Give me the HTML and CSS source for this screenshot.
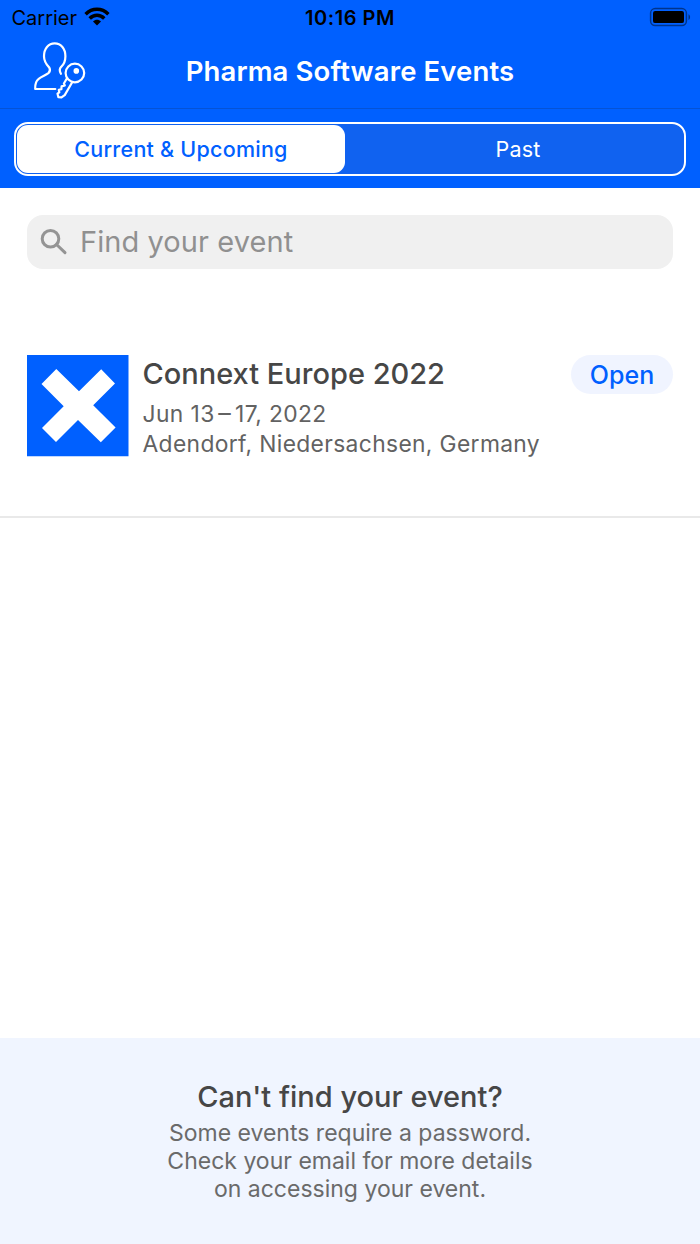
FILE: index.html
```html
<!DOCTYPE html>
<html lang="en">
<head>
<meta charset="utf-8">
<title>Pharma Software Events</title>
<link rel="stylesheet" href="styles.css">
</head>
<body>
<div class="screen">
  <header class="header">
    <div class="status">
      <div class="status-left">
        <span class="carrier">Carrier</span>
        <svg class="wifi" width="26" height="20" viewBox="0 0 26 20" fill="none">
          <path d="M1.6 7.2C8.2.7 17.8.7 24.4 7.2" stroke="#000" stroke-width="3.5"/>
          <path d="M5.7 11.4c4.2-4.1 10.4-4.1 14.6 0" stroke="#000" stroke-width="3.5"/>
          <path d="M13 18.6l-4-4.1c2.4-2.2 5.6-2.2 8 0z" fill="#000"/>
        </svg>
      </div>
      <span class="time">10:16 PM</span>
      <div class="status-right">
        <svg width="42" height="20" viewBox="0 0 42 20" fill="none">
          <rect x="1.6" y="1.6" width="35.8" height="17" rx="4.5" stroke="#000" stroke-opacity=".45" stroke-width="1.5"/>
          <rect x="4" y="4.1" width="31" height="12" rx="2.2" fill="#000"/>
          <path d="M39.5 7.3c2.1.9 2.1 4.7 0 5.6z" fill="#000" fill-opacity=".5"/>
        </svg>
      </div>
    </div>
    <div class="nav">
      <svg class="account" width="80" height="68" viewBox="0 0 80 68" fill="none" stroke="#fff" stroke-width="2.2" stroke-linecap="round" stroke-linejoin="round">
        <path d="M35.3 53H15.2c-.3-5.2.5-8 3.500-10.200 3.300-2.400 7-3.600 9.700-5.600 1.500-1.300 1.900-3.700.9-5.600C26.200 28.500 24 25 24 20.300 24 12.500 28.400 7.400 34.700 7.400S45.400 12.500 45.400 20.300c0 4.700-1.600 8.300-4.200 10.500-1.900 1.900-1.700 4.500-.3 7"/>
        <circle cx="54.900" cy="37" r="9.300"/>
        <circle cx="56.300" cy="34.900" r="1.700" fill="#fff"/>
        <path d="M47 42.200l-3.100 5.300.9 1.900-3.200 1-.2 2.800-2.600.6.500 2.600-1.800 1.200.9 3.600 3.100.2 3.200-2.300L52.200 46.200"/>
      </svg>
      <h1 class="title">Pharma Software Events</h1>
    </div>
    <div class="segment-bar">
      <div class="segments">
        <button class="segment selected">Current &amp; Upcoming</button>
        <button class="segment past">Past</button>
      </div>
    </div>
  </header>
  <main class="content">
    <div class="search">
      <svg class="search-icon" width="28" height="28" viewBox="0 0 28 28" fill="none" stroke="#949494" stroke-width="3">
        <circle cx="10.500" cy="10.700" r="8.300"/>
        <path d="M16.500 16.500l8.500 8.200" stroke-linecap="round"/>
      </svg>
      <span class="placeholder">Find your event</span>
    </div>
    <article class="event">
      <svg class="event-logo" width="102" height="102" viewBox="0 0 102 102">
        <path fill="#0060ff" d="M0 0h101.500v101.300H0z"/>
        <path fill="#fff" d="M29.300 14L52 36.200 74.200 14.300 88 28.500 66.200 50.200 88.600 72.500 73.800 87.300 51 65 29 87 15 73 36.700 51.300 14.500 29z"/>
      </svg>
      <div class="event-text">
        <h2 class="event-name">Connext Europe 2022</h2>
        <p class="event-date">Jun 13<span class="dash">–</span>17, 2022</p>
        <p class="event-place">Adendorf, Niedersachsen, Germany</p>
      </div>
      <button class="open">Open</button>
    </article>
  </main>
  <footer class="help">
    <h2 class="help-title">Can't find your event?</h2>
    <p class="help-text">Some events require a password.<br>Check your email for more details<br>on accessing your event.</p>
  </footer>
</div>
</body>
</html>
```
FILE: styles.css
```css
* { box-sizing: border-box; margin: 0; padding: 0; }
body { font-family: Inter, "Liberation Sans", sans-serif; background: #fff; }
button { border: 0; background: none; font: inherit; white-space: nowrap; }
svg { display: block; flex: none; }
h1, h2, p, span { white-space: nowrap; }
.screen { width: 700px; height: 1244px; display: flex; flex-direction: column; overflow: hidden; }

.header { height: 188px; flex: none; background: #0060ff; }
.status { height: 36px; display: grid; grid-template-columns: 1fr auto 1fr; color: #000; line-height: 36px; }
.status-left { display: flex; padding-left: 11.5px; gap: 7px; }
.wifi { margin-top: 7px; }
.carrier { font-size: 20px; }
.time { font-size: 20px; font-weight: 600; letter-spacing: .55px; }
.status-right { display: flex; justify-content: flex-end; padding: 7px 9px 0 0; }
.nav { height: 73px; display: grid; grid-template-columns: 1fr auto 1fr; border-bottom: 1px solid #0553d6; }
.account { margin-left: 20px; }
.title { color: #fff; font-size: 27.5px; font-weight: 600; line-height: 70px; letter-spacing: .13px; }
.segment-bar { padding: 13px 14px 0; }
.segments { height: 54px; border: 2px solid #fff; border-radius: 14px; background: #1062f0; display: grid; grid-template-columns: 328px 1fr; padding: 1px 0 1px 1px; }
.segment { color: #fff; font-size: 21.5px; font-weight: 500; line-height: 48px; letter-spacing: .24px; }
.selected { background: #fff; color: #0060ff; border-radius: 11px; }
.past { font-weight: 400; padding-left: 7px; }

.content { flex: 1; }
.search { margin: 27px 27px 0; height: 54px; border-radius: 16px; background: #f0f0f0; display: flex; padding: 13px 0 0 13px; gap: 12px; }
.placeholder { font-size: 29px; line-height: 28px; color: #909090; letter-spacing: .07px; }
.event { display: flex; height: 249px; padding: 86px 27px 0; border-bottom: 2px solid #e9e9e9; }
.event-text { flex: 1; padding-left: 13.5px; color: #626262; }
.event-name { font-size: 29px; font-weight: 500; line-height: 38px; color: #464646; }
.event-date { font-size: 22.8px; letter-spacing: .4px; line-height: 31px; padding-top: 5px; }
.dash { font-size: 25px; line-height: 1; margin: 0 4px 0 3.5px; }
.event-place { font-size: 22.8px; letter-spacing: .36px; line-height: 30px; }
.open { width: 102px; height: 39px; border-radius: 20px; background: #f0f4ff; color: #0060ff; font-size: 25px; font-weight: 500; }

.help { height: 206px; flex: none; background: #f0f5ff; padding-top: 39px; text-align: center; }
.help-title { font-size: 29px; font-weight: 500; line-height: 40px; color: #464646; }
.help-text { font-size: 23px; line-height: 28px; color: #6a6a6a; padding-top: 2px; }
```
